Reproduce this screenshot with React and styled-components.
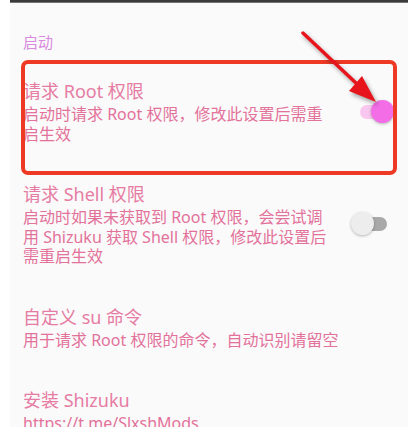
import styled, { createGlobalStyle } from 'styled-components';

const GlobalStyle = createGlobalStyle`
  html, body {
    margin: 0;
    padding: 0;
    background: #ffffff;
  }
  body {
    font-family: "Noto Sans", "Noto Sans CJK SC", sans-serif;
  }
`;

const Page = styled.div`
  padding: 0 2px 0 10px;
  height: 427px;
  overflow: hidden;
`;

const Screen = styled.div`
  position: relative;
  height: 100%;
  background: #fafafa;
  overflow: hidden;
`;

const TopEdge = styled.div`
  height: 3px;
  background: linear-gradient(#3a3a3a, #3a3a3a 60%, #9c9c9c);
`;

const SectionHeader = styled.div`
  padding: 29px 13px 8px;
  font-size: 15px;
  line-height: 20px;
  color: #d98ae0;
`;

const Item = styled.div`
  display: flex;
  align-items: center;
  gap: 21px;
  padding: 19px 17px 19px 13px;
`;

const Texts = styled.div`
  flex: 1;
  min-width: 0;
`;

const Title = styled.div`
  font-size: 18px;
  line-height: 24px;
  color: #e67ca3;
`;

const Summary = styled.div`
  margin-top: 2px;
  font-size: 16px;
  line-height: 19.5px;
  color: #e3729b;
  white-space: pre;
`;

const Switch = styled.div`
  position: relative;
  flex: none;
  width: 40px;
  height: 24px;
`;

const Track = styled.span`
  position: absolute;
  top: 5px;
  height: 14px;
  left: ${(p) => (p.$on ? '9px' : '4px')};
  right: 4px;
  border-radius: 7px;
  background: ${(p) => (p.$on ? '#f8c6ef' : '#a9a9a9')};
`;

const Thumb = styled.span`
  position: absolute;
  top: 0;
  width: 23px;
  height: 23px;
  border-radius: 50%;
  ${(p) => (p.$on ? 'right: -3px; background: #f36ee6;' : 'left: 0; background: #ededed;')}
  box-shadow: 0 1px 3px rgba(0, 0, 0, 0.28);
`;

// red annotation drawn over the first row
const HighlightBox = styled.div`
  position: absolute;
  left: 11px;
  top: 60px;
  width: 376px;
  height: 115px;
  box-sizing: border-box;
  border: 4px solid #ee3a24;
  border-radius: 7px;
  pointer-events: none;
`;

const Arrow = styled.svg`
  position: absolute;
  left: 275px;
  top: 25px;
  width: 110px;
  height: 85px;
  overflow: visible;
  filter: drop-shadow(2px 3px 2px rgba(0, 0, 0, 0.35));
`;

const Toggle = ({ on }) => (
  <Switch>
    <Track $on={on} />
    <Thumb $on={on} />
  </Switch>
);

const items = [
  {
    title: '请求 Root 权限',
    summary: '启动时请求 Root 权限，修改此设置后需重\n启生效',
    toggle: true,
    on: true,
  },
  {
    title: '请求 Shell 权限',
    summary:
      '启动时如果未获取到 Root 权限，会尝试调\n用 Shizuku 获取 Shell 权限，修改此设置后\n需重启生效',
    toggle: true,
    on: false,
  },
  {
    title: '自定义 su 命令',
    summary: '用于请求 Root 权限的命令，自动识别请留空',
  },
  {
    title: '安装 Shizuku',
    summary: 'https://t.me/SlxshMods',
  },
];

export default function App() {
  return (
    <Page>
      <GlobalStyle />
      <Screen>
        <TopEdge />
        <SectionHeader>启动</SectionHeader>
        {items.map((it) => (
          <Item key={it.title}>
            <Texts>
              <Title>{it.title}</Title>
              <Summary>{it.summary}</Summary>
            </Texts>
            {it.toggle && <Toggle on={it.on} />}
          </Item>
        ))}
        <HighlightBox />
        <Arrow viewBox="0 0 110 85">
          <line x1="18" y1="8" x2="72" y2="59" stroke="#e8141c" strokeWidth="3.5" strokeLinecap="round" />
          <polygon points="91,77 64,66 77,51" fill="#e8141c" />
        </Arrow>
      </Screen>
    </Page>
  );
}
